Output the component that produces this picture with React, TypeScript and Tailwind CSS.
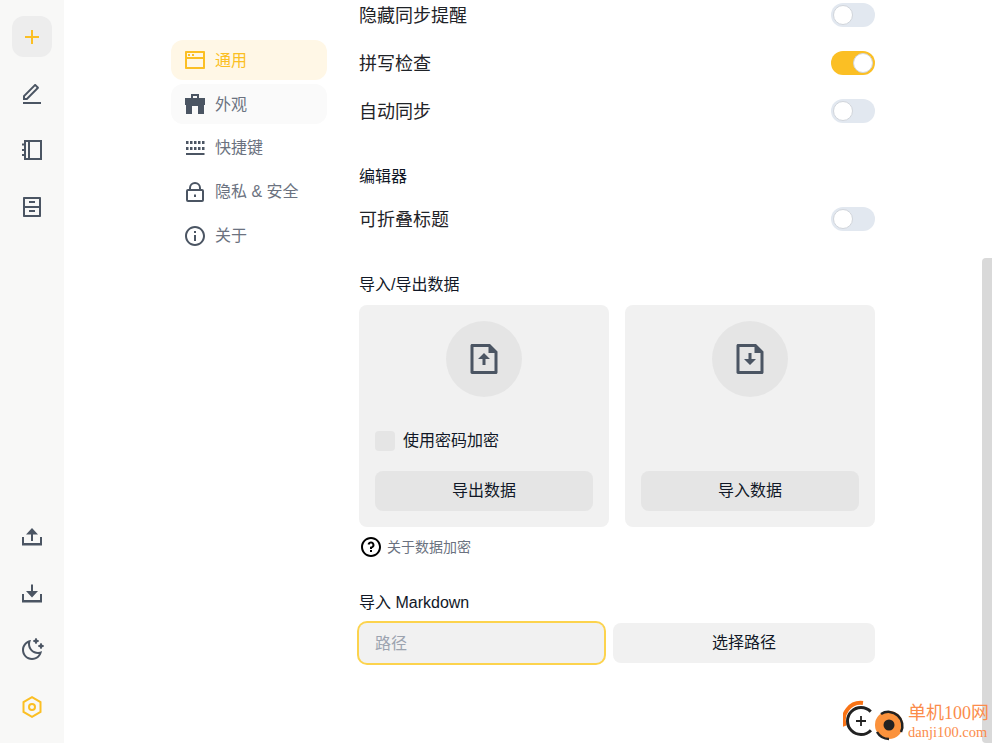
import {
  RiAddLine,
  RiEditLine,
  RiArchiveDrawerLine,
  RiMoonClearLine,
  RiWindowLine,
  RiInformationLine,
  RiFileUploadLine,
  RiFileDownloadLine,
  RiQuestionLine,
} from "react-icons/ri"

const fontStack = "font-['Liberation_Sans','Noto_Sans_CJK_SC',sans-serif]"

type IconProps = { className?: string }

function ThemeIcon({ className }: IconProps) {
  return (
    <svg viewBox="0 0 24 24" className={className} fill="currentColor" fillRule="evenodd">
      <path d="M8 2h8v4h6v7h-1v9h-6v-8H9v8H3v-9H2V6h6V2zm2 2v2h4V4h-4z" />
    </svg>
  )
}

function KeysIcon({ className }: IconProps) {
  const cols = [3, 7, 11, 15, 19]
  return (
    <svg viewBox="0 0 24 24" className={className} fill="currentColor">
      {cols.map((x) => (
        <rect key={`a${x}`} x={x} y="5" width="2.5" height="3" />
      ))}
      {cols.map((x) => (
        <rect key={`b${x}`} x={x} y="11" width="2.5" height="3" />
      ))}
      <rect x="3" y="17" width="18.5" height="2" />
    </svg>
  )
}

function LockIcon({ className }: IconProps) {
  return (
    <svg viewBox="0 0 24 24" className={className} fill="none" stroke="currentColor" strokeWidth="2">
      <rect x="4" y="10" width="16" height="11" rx="1" />
      <path d="M7 10V8a5 5 0 0 1 10 0v2" />
      <path d="M12 14.5v2.5" />
    </svg>
  )
}

function NotebookIcon({ className }: IconProps) {
  return (
    <svg viewBox="0 0 24 24" className={className} fill="none" stroke="currentColor" strokeWidth="2">
      <path d="M5 3h16v18H5z" />
      <path d="M9 3v18" />
      <path d="M2 6.5h3M2 12h3M2 17h3" />
    </svg>
  )
}

function UploadIcon({ className }: IconProps) {
  return (
    <svg viewBox="0 0 24 24" className={className} fill="currentColor">
      <path d="M4 18h16v-6h2v8.500H2V12h2v6z" />
      <path d="M13 9.500V16h-2V9.500H6L12 3l6 6.500h-5z" />
    </svg>
  )
}

function DownloadIcon({ className }: IconProps) {
  return (
    <svg viewBox="0 0 24 24" className={className} fill="currentColor">
      <path d="M4 18h16v-6h2v8.500H2V12h2v6z" />
      <path d="M11 2.500h2V9h5l-6 6.500L6 9h5V2.500z" />
    </svg>
  )
}

function HexIcon({ className }: IconProps) {
  return (
    <svg viewBox="0 0 24 24" className={className} fill="none" stroke="currentColor" strokeWidth="2">
      <path d="M12 2.200l8.500 4.900v9.800L12 21.800l-8.500-4.900V7.100z" />
      <circle cx="12" cy="12" r="3" />
    </svg>
  )
}

function Toggle({ on }: { on?: boolean }) {
  return (
    <div
      className={`flex h-6 w-11 items-center rounded-full p-0.5 ${
        on ? "justify-end bg-[#fbbf24]" : "justify-start bg-[#e2e8f0]"
      }`}
    >
      <div className="h-5 w-5 rounded-full border border-[#d1d5db] bg-white" />
    </div>
  )
}

function Row({ label, on }: { label: string; on?: boolean }) {
  return (
    <div className="flex h-6 items-center justify-between">
      <span className="pt-[2px] text-[18px] text-[#1f2328]">{label}</span>
      <Toggle on={on} />
    </div>
  )
}

const navItems = [
  { label: "通用", icon: RiWindowLine, cls: "bg-[#fff7e6] text-[#fbbf24]", text: "pt-px" },
  { label: "外观", icon: ThemeIcon, cls: "bg-[#fafafa] text-[#4b5563]", text: "pt-px text-[#6b7280]" },
  { label: "快捷键", icon: KeysIcon, cls: "text-[#4b5563]", text: "text-[#6b7280]" },
  { label: "隐私 & 安全", icon: LockIcon, cls: "text-[#4b5563]", text: "text-[#6b7280]" },
  { label: "关于", icon: RiInformationLine, cls: "text-[#4b5563]", text: "text-[#6b7280]" },
]

export default function App() {
  return (
    <div className={`relative flex h-[743px] w-[992px] overflow-hidden bg-white ${fontStack}`}>
      {/* left rail */}
      <aside className="flex w-16 shrink-0 flex-col items-center justify-between bg-[#f8f8f7] pt-4 pb-4 text-[#4b5563]">
        <div className="flex flex-col items-center gap-[16.5px]">
          <button className="flex h-[41px] w-10 items-center justify-center rounded-xl bg-[#ededed] text-[#fbbf24]">
            <RiAddLine size={24} />
          </button>
          <button className="flex h-10 w-10 items-center justify-center">
            <RiEditLine size={24} />
          </button>
          <button className="flex h-10 w-10 items-center justify-center">
            <NotebookIcon className="h-6 w-6" />
          </button>
          <button className="flex h-10 w-10 items-center justify-center">
            <RiArchiveDrawerLine size={24} />
          </button>
        </div>
        <div className="flex flex-col items-center gap-[16.67px]">
          <button className="flex h-10 w-10 items-center justify-center">
            <UploadIcon className="h-6 w-6" />
          </button>
          <button className="flex h-10 w-10 items-center justify-center">
            <DownloadIcon className="h-6 w-6" />
          </button>
          <button className="flex h-10 w-10 items-center justify-center">
            <RiMoonClearLine size={24} />
          </button>
          <button className="flex h-10 w-10 items-center justify-center text-[#fbbf24]">
            <HexIcon className="h-6 w-6" />
          </button>
        </div>
      </aside>

      {/* settings nav */}
      <nav className="ml-[107px] flex w-[156px] shrink-0 flex-col gap-1 pt-10">
        {navItems.map((item) => (
          <div key={item.label} className={`flex h-10 items-center gap-2 rounded-xl px-3 ${item.cls}`}>
            <item.icon className="h-6 w-6 shrink-0" />
            <span className={`text-base ${item.text}`}>{item.label}</span>
          </div>
        ))}
      </nav>

      {/* settings body */}
      <main className="ml-8 flex w-[516px] shrink-0 flex-col pt-[3px] text-[#111827]">
        <div className="flex flex-col gap-6">
          <Row label="隐藏同步提醒" />
          <Row label="拼写检查" on />
          <Row label="自动同步" />
        </div>

        <h2 className="mt-[42px] text-base leading-6">编辑器</h2>
        <div className="mt-[18px]">
          <Row label="可折叠标题" />
        </div>

        <h2 className="mt-[42px] text-base leading-6">导入/导出数据</h2>
        <div className="mt-2 grid grid-cols-2 gap-4">
          <div className="flex h-[222px] flex-col rounded-lg bg-[#f1f1f1] p-4">
            <div className="mx-auto flex h-[76px] w-[76px] items-center justify-center rounded-full bg-[#e5e5e5] text-[#4b5563]">
              <RiFileUploadLine size={36} />
            </div>
            <label className="mt-[34px] flex h-5 items-center gap-2">
              <span className="h-5 w-5 rounded bg-[#e5e5e5]" />
              <span className="text-base">使用密码加密</span>
            </label>
            <button className="mt-5 h-10 rounded-lg bg-[#e5e5e5] text-base">导出数据</button>
          </div>
          <div className="flex h-[222px] flex-col rounded-lg bg-[#f1f1f1] p-4">
            <div className="mx-auto flex h-[76px] w-[76px] items-center justify-center rounded-full bg-[#e5e5e5] text-[#4b5563]">
              <RiFileDownloadLine size={36} />
            </div>
            <button className="mt-auto h-10 rounded-lg bg-[#e5e5e5] text-base">导入数据</button>
          </div>
        </div>

        <div className="mt-2 flex h-6 items-center gap-1">
          <RiQuestionLine size={24} className="text-black" />
          <span className="text-sm text-[#6b7280]">关于数据加密</span>
        </div>

        <h2 className="mt-[32px] text-base leading-6">导入 Markdown</h2>
        <div className="mt-2 flex gap-[9px]">
          <div className="flex h-10 w-[245px] items-center rounded-lg bg-[#f1f1f1] px-4 pt-px text-base text-[#9ca3af] ring-2 ring-[#fcd34d]">
            路径
          </div>
          <button className="h-10 flex-1 rounded-lg bg-[#f1f1f1] text-base">选择路径</button>
        </div>
      </main>

      {/* scrollbar */}
      <div className="ml-auto w-2.5 shrink-0 pt-[258px]">
        <div className="h-full w-full rounded-l-sm bg-[#d9d9d9]" />
      </div>

      {/* watermark */}
      <div className="absolute right-[3px] bottom-0 flex h-[44px] items-center gap-px">
        <svg viewBox="0 0 64 44" className="h-[44px] w-16">
          <path d="M2 27 A17 17 0 0 1 20 4" fill="none" stroke="#f97316" strokeWidth="4" />
          <circle cx="18" cy="22" r="13.500" fill="#fff" stroke="#222" strokeWidth="3" strokeDasharray="64 21" strokeDashoffset="-10" />
          <path d="M18 17v10M13 22h10" stroke="#222" strokeWidth="1.800" />
          <circle cx="46" cy="26" r="14" fill="#fb923c" />
          <path d="M38 15 A14 14 0 0 1 58 33" fill="none" stroke="#222" strokeWidth="2.500" />
          <path d="M34 33 A14 14 0 0 0 46 40" fill="none" stroke="#222" strokeWidth="2.500" />
          <circle cx="46" cy="26" r="5.500" fill="#222" />
        </svg>
        <div className="flex flex-col font-['Liberation_Serif','Noto_Sans_CJK_SC',serif] text-[#fb8c4b]">
          <span className="text-[18px] leading-[22px]">单机100网</span>
          <span className="text-[14.5px] leading-[17px]">danji100.com</span>
        </div>
      </div>
    </div>
  )
}
